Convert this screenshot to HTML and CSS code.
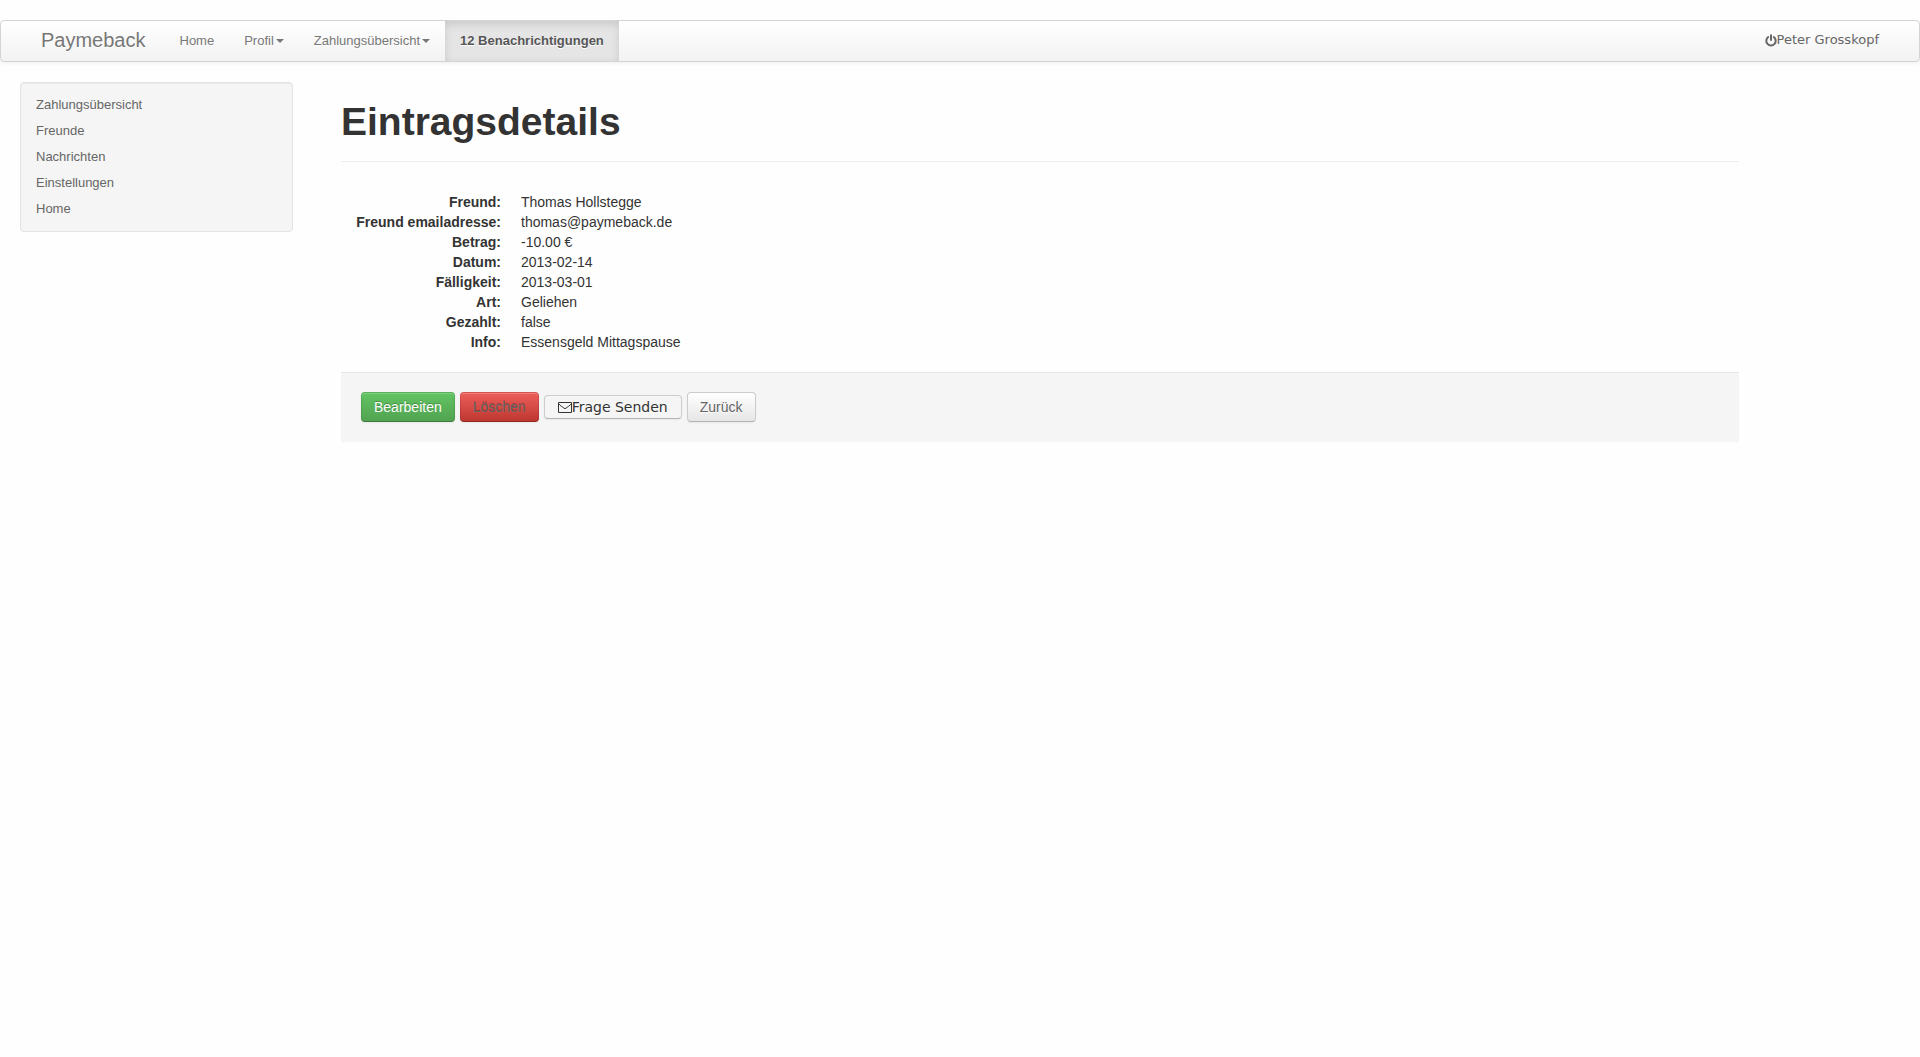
FILE: index.html
```html
<!DOCTYPE html>
<html lang="de">
<head>
<meta charset="utf-8">
<title>Paymeback</title>
<link rel="stylesheet" href="styles.css">
</head>
<body>
<header class="navbar">
  <a class="brand" href="#">Paymeback</a>
  <nav class="nav">
    <a class="nav-link" href="#">Home</a>
    <a class="nav-link" href="#">Profil<span class="caret"></span></a>
    <a class="nav-link" href="#">Zahlungsübersicht<span class="caret"></span></a>
    <a class="nav-link active" href="#">12 Benachrichtigungen</a>
  </nav>
  <a class="user" href="#"><svg viewBox="0 0 12 13" width="12" height="13" aria-hidden="true"><path d="M3.2 3A4.7 4.7 0 1 0 8.8 3" fill="none" stroke="currentColor" stroke-width="2" stroke-linecap="round"/><path d="M6 1.2V6" stroke="currentColor" stroke-width="2" stroke-linecap="round"/></svg>Peter Grosskopf</a>
</header>
<div class="layout">
  <aside class="sidebar">
    <a href="#">Zahlungsübersicht</a>
    <a href="#">Freunde</a>
    <a href="#">Nachrichten</a>
    <a href="#">Einstellungen</a>
    <a href="#">Home</a>
  </aside>
  <main class="content">
    <div class="page-header"><h1>Eintragsdetails</h1></div>
    <dl class="details">
      <dt>Freund:</dt><dd>Thomas Hollstegge</dd>
      <dt>Freund emailadresse:</dt><dd>thomas@paymeback.de</dd>
      <dt>Betrag:</dt><dd>-10.00 €</dd>
      <dt>Datum:</dt><dd>2013-02-14</dd>
      <dt>Fälligkeit:</dt><dd>2013-03-01</dd>
      <dt>Art:</dt><dd>Geliehen</dd>
      <dt>Gezahlt:</dt><dd>false</dd>
      <dt>Info:</dt><dd>Essensgeld Mittagspause</dd>
    </dl>
    <div class="form-actions">
      <button type="button" class="btn btn-success">Bearbeiten</button>
      <button type="button" class="btn btn-danger">Löschen</button>
      <button type="button" class="btn btn-mail"><svg viewBox="0 0 14 12" width="14" height="12" aria-hidden="true"><path d="M.5 1.5H13.5V11.5H.5ZM.5 2.5C2 5 5 6 6 7.2Q7 8 8 7.2C9 6 12 5 13.5 2.5" fill="none" stroke="currentColor"/></svg>Frage Senden</button>
      <button type="button" class="btn">Zurück</button>
    </div>
  </main>
</div>
</body>
</html>
```
FILE: styles.css
```css
* {
  box-sizing: border-box;
}

body {
  margin: 20px 0 0;
  background: #fefefe;
  color: #333;
  font: 14px/20px "Liberation Sans", Arial, sans-serif;
}

a {
  color: #666;
  text-decoration: none;
}

.navbar {
  display: flex;
  min-height: 42px;
  margin-bottom: 20px;
  padding: 0 20px;
  border: 1px solid #d4d4d4;
  border-radius: 4px;
  background: linear-gradient(#fff, #f2f2f2);
  box-shadow: 0 1px 4px rgba(0, 0, 0, .067);
  font-size: 13px;
}

.brand {
  padding: 9px 19px 11px 20px;
  color: #777;
  font-size: 20px;
  text-shadow: 0 1px 0 #fff;
}

.nav {
  display: flex;
}

.nav-link {
  padding: 10px 15px;
  color: #777;
  text-shadow: 0 1px 0 #fff;
}

.nav-link.active {
  background: #e5e5e5;
  box-shadow: inset 0 3px 8px rgba(0, 0, 0, .125);
  color: #555;
  font-weight: bold;
}

.caret {
  display: inline-block;
  margin: 8px 0 0 2px;
  border-top: 4px solid #777;
  border-right: 4px solid transparent;
  border-left: 4px solid transparent;
  vertical-align: top;
}

.user {
  display: flex;
  align-items: center;
  margin-left: auto;
  padding: 0 20px 2px;
  font-family: "DejaVu Sans", sans-serif;
}

.layout {
  display: grid;
  grid-template-columns: 273fr 1398fr 113fr;
  column-gap: 48px;
  align-items: start;
  padding: 0 20px;
}

.sidebar {
  display: flex;
  flex-direction: column;
  gap: 6px;
  padding: 12px 15px;
  border: 1px solid #e3e3e3;
  border-radius: 4px;
  background: #f5f5f5;
  box-shadow: inset 0 1px 1px rgba(0, 0, 0, .05);
  font-size: 13px;
}

.page-header {
  margin: 20px 0 30px;
  padding-bottom: 19px;
  border-bottom: 1px solid #eee;
}

h1 {
  margin: 0;
  font-size: 39px;
  line-height: 40px;
}

.details {
  display: grid;
  grid-template-columns: 160px 1fr;
  column-gap: 20px;
  margin: 0 0 20px;
}

dt {
  font-weight: bold;
  text-align: right;
}

dd {
  margin: 0;
}

.form-actions {
  display: flex;
  align-items: baseline;
  gap: 5px;
  padding: 19px 20px 20px;
  border-top: 1px solid #e5e5e5;
  background: #f5f5f5;
}

.btn {
  padding: 4px 12px;
  border: 1px solid #ccc;
  border-bottom-color: #b3b3b3;
  border-radius: 4px;
  background: linear-gradient(#fff, #e6e6e6);
  box-shadow: inset 0 1px 0 rgba(255, 255, 255, .2), 0 1px 2px rgba(0, 0, 0, .05);
  color: #666;
  font: inherit;
  text-shadow: 0 1px 1px rgba(255, 255, 255, .75);
}

.btn-success {
  border-color: rgba(0, 0, 0, .1) rgba(0, 0, 0, .1) rgba(0, 0, 0, .25);
  background: linear-gradient(#62c462, #51a351) border-box;
  color: #fff;
  text-shadow: 0 -1px 0 rgba(0, 0, 0, .25);
}

.btn-danger {
  border-color: rgba(0, 0, 0, .1) rgba(0, 0, 0, .1) rgba(0, 0, 0, .25);
  background: linear-gradient(#ee5f5b, #bd362f) border-box;
  text-shadow: 0 -1px 0 rgba(0, 0, 0, .25);
}

.btn-mail {
  padding: 4px 13px;
  background: #f5f5f5;
  color: #333;
  font-family: "DejaVu Sans", sans-serif;
  line-height: 14px;
}

.btn-mail svg {
  vertical-align: -1px;
}
```
